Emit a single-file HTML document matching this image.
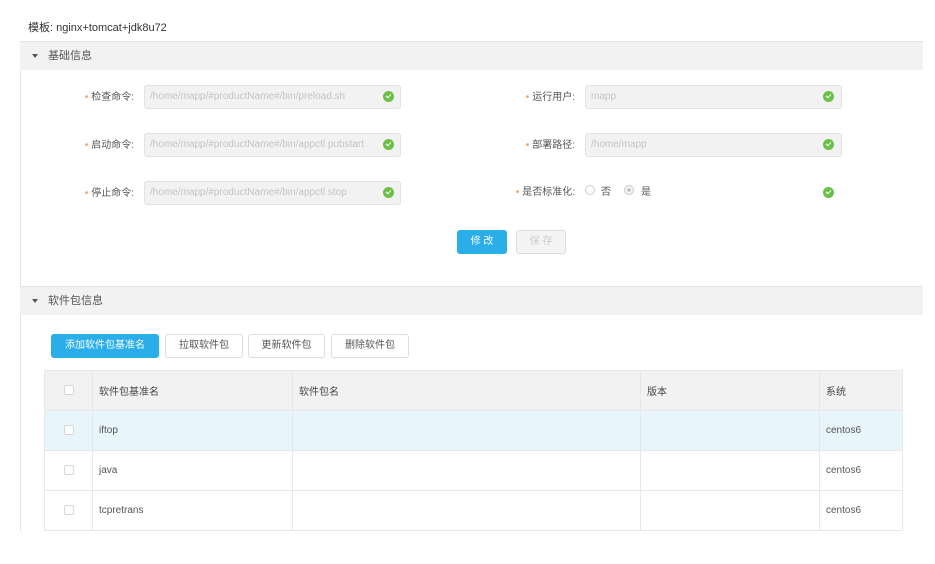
<!DOCTYPE html>
<html><head><meta charset="utf-8"><style>
*{box-sizing:border-box;margin:0;padding:0}
body{width:935px;height:564px;background:#fff;font-family:"Liberation Sans","Noto Sans CJK SC",sans-serif;color:#333;position:relative;overflow:hidden;font-size:11px}
.a{position:absolute}
.title{left:28px;top:19px;font-size:11px;color:#333}
.panel{left:20px;top:41px;width:903px;height:490px;border-left:1px solid #e6e6e6}
.sec{left:20px;width:903px;height:29px;background:#f2f2f2;border-top:1px solid #e6e6e6;font-size:11px;color:#555;line-height:29px;padding-left:12px}
.sec:before{content:"";display:inline-block;border-left:3.5px solid transparent;border-right:3.5px solid transparent;border-top:4px solid #555;margin-right:10px;vertical-align:middle}
.lbl{font-size:10px;color:#555;text-align:right;width:120px;line-height:24px}
.lbl b{color:#f5a05a;font-weight:normal;margin-right:3px}
.inp{width:257px;height:24px;background:#f2f2f2;border:1px solid #e2e2e2;border-radius:3px;font-size:10px;color:#c4c4c4;line-height:22px;padding-left:5px;white-space:nowrap;overflow:hidden}
.ok{width:11px;height:11px;border-radius:50%;background:#6cc04a}
.ok:after{content:"";position:absolute;left:3px;top:2.5px;width:4px;height:2px;border-left:1.5px solid #fff;border-bottom:1.5px solid #fff;transform:rotate(-45deg)}
.btn{height:24px;border:1px solid #ddd;border-radius:3px;font-size:10px;text-align:center;line-height:22px;color:#555;background:#fff}
.blue{background:#2aaeea;border-color:#2aaeea;color:#fff}
.tbl{left:44px;top:370px;width:859px;border-collapse:collapse;font-size:10px;color:#555}
.tbl td{border:1px solid #e8e8e8;height:40px;padding-left:6px}
.tbl tr.h td{background:#f2f2f2;color:#444}
.tbl tr.s td{background:#e8f5fb}
.cb{display:inline-block;width:10px;height:10px;border:1px solid #d6d6d6;border-radius:2px;background:#fff;margin-left:19px;vertical-align:middle}
.radio{width:10px;height:10px;border:1px solid #ccc;border-radius:50%}
</style></head><body>
<div class="a title">模板: nginx+tomcat+jdk8u72</div>
<div class="a panel"></div>
<div class="a sec" style="top:41px">基础信息</div>

<div class="a lbl" style="left:14px;top:86px"><b>•</b>检查命令:</div>
<div class="a inp" style="left:144px;top:85px">/home/mapp/#productName#/bin/preload.sh</div>
<div class="a ok" style="left:383px;top:91px"></div>
<div class="a lbl" style="left:14px;top:134px"><b>•</b>启动命令:</div>
<div class="a inp" style="left:144px;top:133px">/home/mapp/#productName#/bin/appctl pubstart</div>
<div class="a ok" style="left:383px;top:139px"></div>
<div class="a lbl" style="left:14px;top:182px"><b>•</b>停止命令:</div>
<div class="a inp" style="left:144px;top:181px">/home/mapp/#productName#/bin/appctl stop</div>
<div class="a ok" style="left:383px;top:187px"></div>

<div class="a lbl" style="left:455px;top:86px"><b>•</b>运行用户:</div>
<div class="a inp" style="left:585px;top:85px">mapp</div>
<div class="a ok" style="left:823px;top:91px"></div>
<div class="a lbl" style="left:455px;top:134px"><b>•</b>部署路径:</div>
<div class="a inp" style="left:585px;top:133px">/home/mapp</div>
<div class="a ok" style="left:823px;top:139px"></div>
<div class="a lbl" style="left:455px;top:181px"><b>•</b>是否标准化:</div>
<div class="a radio" style="left:585px;top:185px"></div>
<div class="a" style="left:601px;top:183px;font-size:10px;color:#555">否</div>
<div class="a radio" style="left:624px;top:185px;background:radial-gradient(circle,#bbb 1.5px,#f4f4f4 2px)"></div>
<div class="a" style="left:641px;top:183px;font-size:10px;color:#555">是</div>
<div class="a ok" style="left:823px;top:187px"></div>

<div class="a btn blue" style="left:457px;top:230px;width:50px">修 改</div>
<div class="a btn" style="left:516px;top:230px;width:50px;background:#f4f4f4;color:#ccc">保 存</div>

<div class="a sec" style="top:286px">软件包信息</div>
<div class="a btn blue" style="left:51px;top:334px;width:108px">添加软件包基准名</div>
<div class="a btn" style="left:165px;top:334px;width:78px">拉取软件包</div>
<div class="a btn" style="left:248px;top:334px;width:77px">更新软件包</div>
<div class="a btn" style="left:331px;top:334px;width:78px">删除软件包</div>

<table class="a tbl">
<tr class="h"><td style="width:48px;padding:0"><span class="cb"></span></td><td style="width:200px">软件包基准名</td><td style="width:348px">软件包名</td><td style="width:179px">版本</td><td>系统</td></tr>
<tr class="s"><td style="padding:0"><span class="cb"></span></td><td>iftop</td><td></td><td></td><td>centos6</td></tr>
<tr><td style="padding:0"><span class="cb"></span></td><td>java</td><td></td><td></td><td>centos6</td></tr>
<tr><td style="padding:0"><span class="cb"></span></td><td>tcpretrans</td><td></td><td></td><td>centos6</td></tr>
</table>
</body></html>
